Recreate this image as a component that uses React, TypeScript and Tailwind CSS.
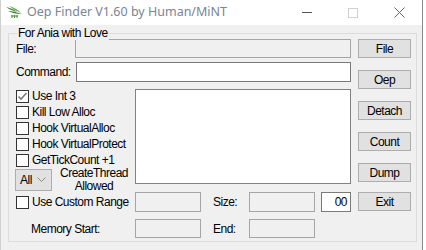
import { ReactNode } from "react";

const ui = "font-['Liberation_Sans',Arial,sans-serif] text-[12px] tracking-[-0.5px] text-black";

function Box({ className = "", children }: { className?: string; children?: ReactNode }) {
  return (
    <div className={`border border-[#a5a5a5] bg-[#f0f0f0] ${className}`}>{children}</div>
  );
}

function Btn({ label, className = "" }: { label: string; className?: string }) {
  return (
    <div
      className={`flex h-[19px] w-[53px] items-center justify-center border border-[#adadad] bg-[#e1e1e1] leading-none ${className}`}
    >
      {label}
    </div>
  );
}

function Check({ label, checked = false }: { label: string; checked?: boolean }) {
  return (
    <div className="flex h-[16px] items-center">
      <div className="flex h-[13px] w-[13px] items-center justify-center border border-[#333333] bg-white">
        {checked && (
          <svg width="11" height="11" viewBox="0 0 11 11">
            <path d="M1.5 5.5 L4 8 L9.5 2" fill="none" stroke="#7a7a7a" strokeWidth="1.6" />
          </svg>
        )}
      </div>
      <span className="ml-[3px] leading-none">{label}</span>
    </div>
  );
}

function AppIcon() {
  return (
    <svg width="18" height="15" viewBox="0 0 18 15">
      <path d="M1 2 C5 3 9 4 12 7 C9 6 5 5 1 2 Z" fill="#4f8f3a" />
      <path d="M4 1 C8 2 12 4 16 8 C12 6 8 4 4 1 Z" fill="#5da045" />
      <path d="M3 6 C7 6 11 7 17 9 C11 9 7 8 3 6 Z" fill="#3f7a2e" />
      <path d="M6 11 h7 M7 10 v3 M12 10 v3 M9.5 10 v3" stroke="#4f8f3a" strokeWidth="1" />
    </svg>
  );
}

export default function App() {
  return (
    <div className="h-[250px] w-[426px] overflow-hidden bg-white">
      <div className="flex h-[250px] w-[423px] flex-col border-l border-r border-l-[#cfcfcf] border-r-[#8a8a8a]">
        {/* Title bar */}
        <div className="flex h-[25px] items-center bg-white">
          <div className="ml-[4px] flex h-[25px] w-[18px] items-center">
            <AppIcon />
          </div>
          <span className="ml-[4px] font-['Noto_Sans',sans-serif] text-[12.5px] text-[#7a8494]">
            Oep Finder V1.60 by Human/MiNT
          </span>
          <div className="ml-auto flex h-[25px]">
            <div className="flex w-[46px] items-center justify-center">
              <div className="h-px w-[10px] bg-[#555555]" />
            </div>
            <div className="flex w-[46px] items-center justify-center">
              <div className="h-[10px] w-[10px] border border-[#d0d0d0]" />
            </div>
            <div className="flex w-[46px] items-center justify-center">
              <svg width="11" height="11" viewBox="0 0 11 11">
                <path d="M0.5 0.5 L10.5 10.5 M10.5 0.5 L0.5 10.5" stroke="#666666" strokeWidth="1" />
              </svg>
            </div>
          </div>
        </div>

        {/* Dialog body */}
        <div className={`flex-1 bg-[#f0f0f0] pl-[7px] pt-[8px] ${ui}`}>
          <div className="relative h-[209px] w-[409px] border border-[#dcdcdc]">
            <span className="absolute left-[8px] top-[-8px] bg-[#f0f0f0] px-px leading-[14px]">
              For Ania with Love
            </span>

            <div className="flex pl-[7px] pt-[5px]">
              {/* Left area */}
              <div className="flex w-[335px] flex-col">
                <div className="flex h-[19px] items-center">
                  <span className="w-[59px]">File:</span>
                  <Box className="h-[19px] w-[276px] border-[#7a7a7a]" />
                </div>

                <div className="mt-[4px] flex h-[20px] items-center">
                  <span className="w-[60px]">Command:</span>
                  <div className="h-[20px] w-[275px] border border-[#7a7a7a] bg-white" />
                </div>

                <div className="mt-[6px] flex h-[104px]">
                  <div className="flex w-[119px] flex-col">
                    <Check label="Use Int 3" checked />
                    <Check label="Kill Low Alloc" />
                    <Check label="Hook VirtualAlloc" />
                    <Check label="Hook VirtualProtect" />
                    <Check label="GetTickCount +1" />
                    <div className="mt-px flex h-[22px] items-center">
                      <div className="-ml-px flex h-[22px] w-[37px] items-center border border-[#adadad] bg-[#e1e1e1] pl-[4px]">
                        <span className="leading-none">All</span>
                        <svg className="ml-[5px]" width="9" height="6" viewBox="0 0 9 6">
                          <path d="M0.5 0.5 L4.5 4.5 L8.5 0.5" fill="none" stroke="#888888" strokeWidth="1" />
                        </svg>
                      </div>
                      <div className="flex-1 pl-px text-center leading-[13px]">
                        CreateThread
                        <br />
                        Allowed
                      </div>
                    </div>
                  </div>
                  <div className="mt-px h-[95px] w-[216px] border border-[#828282] bg-white" />
                </div>

                <div className="flex h-[20px] items-center">
                  <div className="w-[119px]">
                    <Check label="Use Custom Range" />
                  </div>
                  <Box className="h-[20px] w-[66px]" />
                  <span className="ml-[12px] w-[36px]">Size:</span>
                  <Box className="h-[20px] w-[66px]" />
                  <div className="ml-[6px] flex h-[20px] w-[30px] items-center justify-end border border-[#7a7a7a] bg-white pr-[3px] leading-none">
                    00
                  </div>
                </div>

                <div className="mt-[7px] flex h-[19px] items-center">
                  <span className="w-[119px] pl-[15px]">Memory Start:</span>
                  <Box className="h-[19px] w-[66px]" />
                  <span className="ml-[12px] w-[36px]">End:</span>
                  <Box className="h-[19px] w-[66px]" />
                </div>
              </div>

              {/* Buttons */}
              <div className="ml-[7px] flex flex-col">
                <Btn label="File" />
                <Btn label="Oep" className="mt-[12px]" />
                <Btn label="Detach" className="mt-[12px]" />
                <Btn label="Count" className="mt-[12px]" />
                <Btn label="Dump" className="mt-[12px]" />
                <Btn label="Exit" className="mt-[10px]" />
              </div>
            </div>
          </div>
        </div>
      </div>
    </div>
  );
}
